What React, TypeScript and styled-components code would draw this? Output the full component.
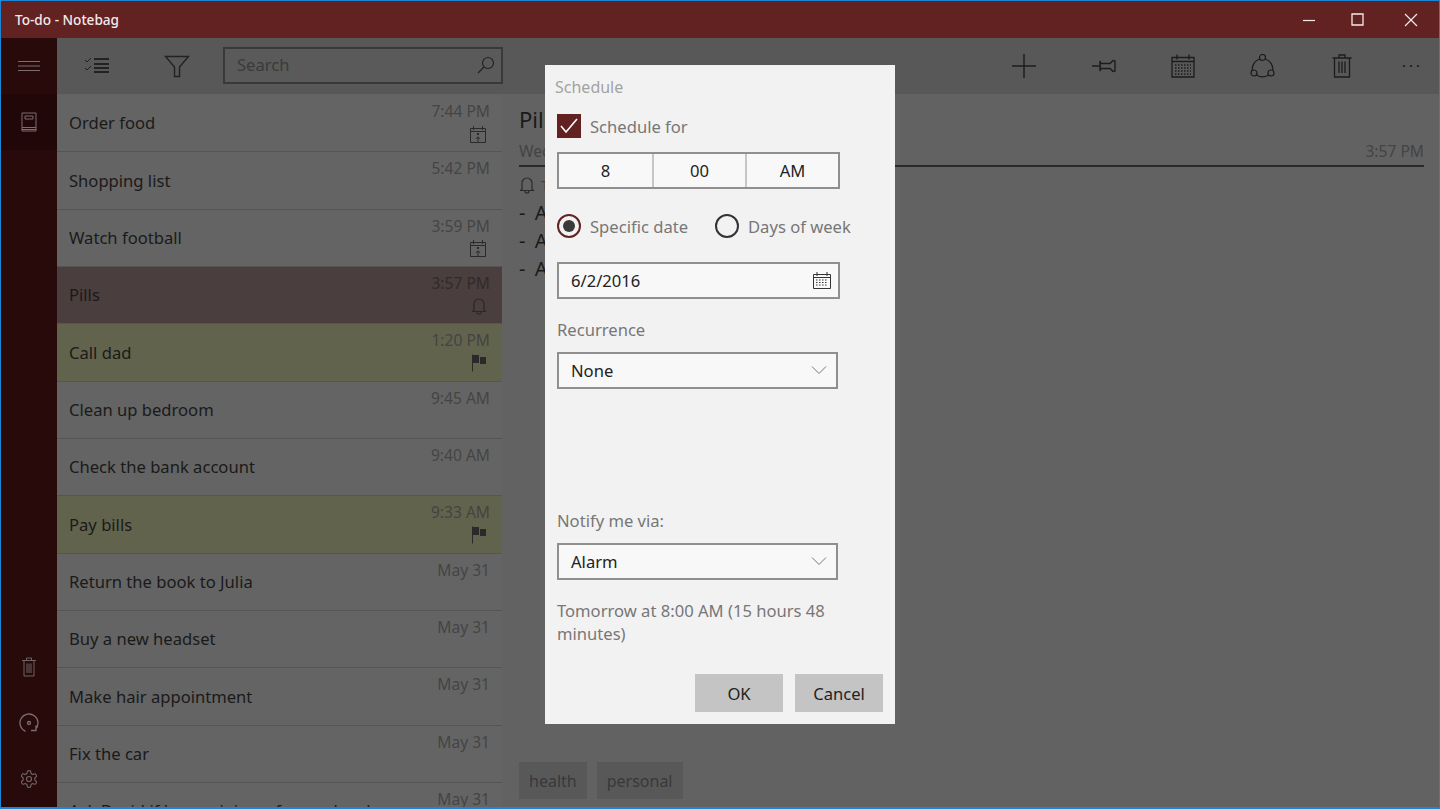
import React from "react";
import styled, { createGlobalStyle } from "styled-components";

const GlobalStyle = createGlobalStyle`
  html, body {
    margin: 0;
    padding: 0;
    height: 100%;
    overflow: hidden;
    background: #636363;
  }
  * { box-sizing: border-box; }
`;

const font = `"Noto Sans", "Open Sans", sans-serif`;

type Task = {
  title: string;
  time: string;
  mark?: "calendar" | "bell" | "flag";
  tone?: "selected" | "flagged";
};

const tasks: Task[] = [
  { title: "Order food", time: "7:44 PM", mark: "calendar" },
  { title: "Shopping list", time: "5:42 PM" },
  { title: "Watch football", time: "3:59 PM", mark: "calendar" },
  { title: "Pills", time: "3:57 PM", mark: "bell", tone: "selected" },
  { title: "Call dad", time: "1:20 PM", mark: "flag", tone: "flagged" },
  { title: "Clean up bedroom", time: "9:45 AM" },
  { title: "Check the bank account", time: "9:40 AM" },
  { title: "Pay bills", time: "9:33 AM", mark: "flag", tone: "flagged" },
  { title: "Return the book to Julia", time: "May 31" },
  { title: "Buy a new headset", time: "May 31" },
  { title: "Make hair appointment", time: "May 31" },
  { title: "Fix the car", time: "May 31" },
  { title: "Ask David if he can join us for our lunch", time: "May 31" },
];

const Window = styled.div`
  width: 1440px;
  height: 809px;
  border: 1px solid #1c86d6;
  border-bottom-width: 2px;
  display: flex;
  flex-direction: column;
  position: relative;
  overflow: hidden;
  font-family: ${font};
`;

const TitleBar = styled.div`
  height: 37px;
  flex: none;
  background: #632222;
  display: flex;
  align-items: center;
  justify-content: space-between;
  padding-left: 14px;
  color: #f4eaea;
  font-size: 13.6px;
  font-weight: 500;
`;

const WindowControls = styled.div`
  display: flex;
  align-items: center;
  gap: 27px;
  padding-right: 21px;
  svg { display: block; }
`;

const MaximizeIcon = styled.svg`
  margin-left: 8px;
`;

const CloseIcon = styled.svg`
  margin-left: 13px;
`;

const Body = styled.div`
  flex: 1;
  min-height: 0;
  display: flex;
`;

const Sidebar = styled.nav`
  width: 56px;
  flex: none;
  background: #280a0b;
  display: flex;
  flex-direction: column;
`;

const SideButton = styled.div<{ $active?: boolean }>`
  height: 56px;
  flex: none;
  display: flex;
  align-items: center;
  justify-content: center;
  background: ${(p) => (p.$active ? "#210708" : "transparent")};
  svg { display: block; margin-left: -1px; }
`;

const SideSpacer = styled.div`
  flex: 1;
`;

const Main = styled.div`
  flex: 1;
  min-width: 0;
  display: flex;
  flex-direction: column;
`;

const Toolbar = styled.div`
  height: 56px;
  flex: none;
  background: #585858;
  display: flex;
  align-items: center;
  justify-content: space-between;
`;

const ToolGroup = styled.div`
  display: flex;
  align-items: center;
`;

const ToolButton = styled.div`
  width: 80px;
  height: 56px;
  display: flex;
  align-items: center;
  justify-content: center;
`;

const SearchBox = styled.div`
  width: 280px;
  height: 37px;
  margin: -1px 0 0 6px;
  border: 2px solid #393939;
  background: #5a5a5a;
  display: flex;
  align-items: center;
  justify-content: space-between;
  padding: 0 6px 2px 12px;
  color: #3a3a3a;
  font-size: 16.6px;
`;

const ActionTool = styled(ToolButton)`
  width: 79.5px;
`;

const MoreButton = styled(ToolButton)`
  width: 57px;
`;

const Content = styled.div`
  flex: 1;
  min-height: 0;
  display: flex;
`;

const TaskList = styled.div`
  width: 445px;
  flex: none;
  overflow: hidden;
  padding-top: 1px;
  background: #636363;
`;

const Row = styled.div<{ $tone?: Task["tone"] }>`
  height: 57.35px;
  display: flex;
  justify-content: space-between;
  padding: 6px 12px 0 12px;
  border-bottom: 1px solid #555;
  color: #1a1a1a;
  background: ${(p) =>
    p.$tone === "selected"
      ? "#4a3e3e"
      : p.$tone === "flagged"
      ? "#62634c"
      : "#646464"};
`;

const RowTitle = styled.div`
  font-size: 16.6px;
  line-height: 22px;
  align-self: center;
  margin-top: -6px;
  white-space: nowrap;
`;

const RowMeta = styled.div<{ $tone?: Task["tone"] }>`
  display: flex;
  flex-direction: column;
  align-items: flex-end;
  color: ${(p) => (p.$tone === "selected" ? "#312b2b" : "#444")};
  font-size: 15.6px;
  line-height: 20px;
`;

const MarkSlot = styled.div`
  height: 22px;
  margin-top: 2px;
  padding-right: 3px;
  display: flex;
  align-items: center;
  svg { display: block; }
`;

const Details = styled.section`
  flex: 1;
  min-width: 0;
  background: #626262;
  padding: 11px 15px 0 17px;
  display: flex;
  flex-direction: column;
  color: #1a1a1a;
`;

const NoteTitle = styled.h1`
  margin: 0;
  font-size: 22px;
  line-height: 29px;
  font-weight: 400;
`;

const NoteDate = styled.div`
  display: flex;
  justify-content: space-between;
  margin-top: 7px;
  padding-bottom: 4px;
  border-bottom: 2px solid #2a2a2a;
  color: #444;
  font-size: 15.6px;
  line-height: 20px;
`;

const NoteReminder = styled.div`
  display: flex;
  align-items: center;
  gap: 6px;
  margin-top: 8px;
  height: 20px;
  color: #444;
  font-size: 15px;
  svg { display: block; }
`;

const NoteBody = styled.div`
  margin-top: 4px;
  font-size: 20px;
  line-height: 28px;
  word-spacing: 4px;
`;

const TagRow = styled.div`
  margin-top: auto;
  margin-bottom: 8px;
  display: flex;
  gap: 10px;
`;

const Tag = styled.div`
  height: 37px;
  padding: 0 10px;
  background: #585858;
  color: #383838;
  display: flex;
  align-items: center;
  font-size: 16px;
`;

const Dialog = styled.div`
  position: absolute;
  left: 544px;
  top: 64px;
  width: 350px;
  height: 659px;
  background: #f2f2f2;
  padding: 11px 12px 12px 12px;
  display: flex;
  flex-direction: column;
  align-items: flex-start;
  color: #777;
  font-size: 16.6px;
`;

const DialogTitle = styled.div`
  margin-left: -2px;
  height: 22px;
  line-height: 22px;
  color: #a3a3a3;
  font-size: 16px;
`;

const CheckRow = styled.div`
  display: flex;
  align-items: center;
  gap: 9px;
  margin-top: 16px;
  height: 24px;
`;

const CheckBox = styled.div`
  width: 24px;
  height: 24px;
  background: #632222;
  display: flex;
  align-items: center;
  justify-content: center;
`;

const TimePicker = styled.div`
  margin-top: 14px;
  width: 283px;
  height: 37px;
  border: 2px solid #8f8f8f;
  background: #f8f8f8;
  display: grid;
  grid-template-columns: 1fr 1fr 1fr;
`;

const TimeCell = styled.div`
  display: flex;
  align-items: center;
  justify-content: center;
  color: #222;
  border-left: 2px solid #c6c6c6;
  &:first-child { border-left: 0; }
`;

const RadioRow = styled.div`
  display: flex;
  align-items: center;
  margin-top: 25px;
  height: 24px;
`;

const RadioItem = styled.div`
  width: 158px;
  display: flex;
  align-items: center;
  gap: 9px;
  white-space: nowrap;
`;

const RadioCircle = styled.div<{ $on?: boolean }>`
  width: 24px;
  height: 24px;
  border-radius: 50%;
  border: 2px solid ${(p) => (p.$on ? "#632222" : "#333")};
  display: flex;
  align-items: center;
  justify-content: center;
  &::after {
    content: "";
    display: ${(p) => (p.$on ? "block" : "none")};
    width: 12px;
    height: 12px;
    border-radius: 50%;
    background: #3a3a3a;
  }
`;

const Field = styled.div<{ $width: number; $gap: number }>`
  margin-top: ${(p) => p.$gap}px;
  width: ${(p) => p.$width}px;
  height: 37px;
  flex: none;
  border: 2px solid #8f8f8f;
  background: #f8f8f8;
  color: #222;
  display: flex;
  align-items: center;
  justify-content: space-between;
  padding: 0 6px 0 12px;
  svg { display: block; }
`;

const ChevronIcon = styled.svg`
  margin-right: 3px;
  margin-top: -2px;
`;

const FieldLabel = styled.div<{ $gap: number }>`
  margin-top: ${(p) => p.$gap}px;
  height: 22px;
  line-height: 22px;
`;

const Message = styled.div`
  margin-top: 19px;
  width: 300px;
  line-height: 23px;
`;

const DialogActions = styled.div`
  margin-top: auto;
  align-self: flex-end;
  display: flex;
  gap: 12px;
`;

const ActionButton = styled.div`
  width: 88px;
  height: 38px;
  background: #c4c4c4;
  color: #222;
  display: flex;
  align-items: center;
  justify-content: center;
`;

const CalendarMark = () => (
  <svg width="18" height="19" viewBox="0 0 18 19" fill="none" stroke="#2a2a2a" strokeWidth="1">
    <path d="M1.5 3.5h15v14h-15zM1.5 6.5h15M4.5 1v4M13.5 1v4M9 18v-6M6.8 14L9 11.8 11.2 14" />
    <rect x="8" y="8" width="2" height="2" fill="#2a2a2a" stroke="none" />
  </svg>
);

const Bell = () => (
  <svg width="16" height="18" viewBox="0 0 16 18" fill="none" stroke="#2a2a2a" strokeWidth="1.2">
    <path d="M3 13.5V7a5 5 0 0 1 10 0v6.5l2 1H1zM6 15a2 2 0 0 0 4 0" />
  </svg>
);

const Flag = () => (
  <svg width="16" height="18" viewBox="0 0 16 18" fill="none">
    <path d="M1.5 0.5v17" stroke="#2a2a2a" strokeWidth="1" />
    <path d="M2 1h6v8H2zM9 3h6v7H9z" fill="#2a2a2a" />
  </svg>
);

const PickerCalendar = () => (
  <svg width="20" height="19" viewBox="0 0 20 19" fill="none" stroke="#333" strokeWidth="1">
    <path d="M1.5 3.5h17v14h-17zM1.5 6.5h17M5 1v4M15 1v4" />
    <path d="M4 9h12M4 11.5h12M4 14h12" strokeDasharray="1.5 1.5" />
  </svg>
);

const Chevron = () => (
  <ChevronIcon width="16" height="10" viewBox="0 0 16 10" fill="none" stroke="#777" strokeWidth="1">
    <path d="M1 1.5l7 7 7-7" />
  </ChevronIcon>
);

const marks = {
  calendar: <CalendarMark />,
  bell: <Bell />,
  flag: <Flag />,
};

export default function App() {
  return (
    <Window>
      <GlobalStyle />
      <TitleBar>
        <span>To-do - Notebag</span>
        <WindowControls>
          <svg width="14" height="14" viewBox="0 0 14 14" stroke="#f4eaea" strokeWidth="1.2">
            <path d="M1 7.5h12" />
          </svg>
          <MaximizeIcon width="13" height="13" viewBox="0 0 13 13" fill="none" stroke="#f4eaea" strokeWidth="1.3">
            <path d="M1 1h11v11H1z" />
          </MaximizeIcon>
          <CloseIcon width="14" height="14" viewBox="0 0 14 14" stroke="#f4eaea" strokeWidth="1.2">
            <path d="M1 1l12 12M13 1L1 13" />
          </CloseIcon>
        </WindowControls>
      </TitleBar>
      <Body>
        <Sidebar>
          <SideButton>
            <svg width="22" height="12" viewBox="0 0 22 12" stroke="#7c6e6e" strokeWidth="1">
              <path d="M0 1.5h22M0 6h22M0 10.5h22" />
            </svg>
          </SideButton>
          <SideButton $active>
            <svg width="16" height="20" viewBox="0 0 16 20" fill="none" stroke="#7c6e6e" strokeWidth="1">
              <path d="M1 1h14v18H1zM1 15.5h14M1 17.5h14M4 4h8v3H4z" />
            </svg>
          </SideButton>
          <SideSpacer />
          <SideButton>
            <svg width="14" height="20" viewBox="0 0 14 20" fill="none" stroke="#6f6363" strokeWidth="1">
              <path d="M0 3.5h14M2 3.5V19h10V3.5M4.5 3.5V1h5v2.5M5 6.5V16M7 6.5V16M9 6.5V16" />
            </svg>
          </SideButton>
          <SideButton>
            <svg width="20" height="20" viewBox="0 0 20 20" fill="none" stroke="#7c6e6e" strokeWidth="1.3">
              <path d="M6.5 18.3A9 9 0 1 1 16.5 16.2M17 12.5v5h-5" />
              <circle cx="10" cy="10" r="1.5" />
            </svg>
          </SideButton>
          <SideButton>
            <svg width="20" height="20" viewBox="0 0 24 24" fill="none" stroke="#6f6363" strokeWidth="1.4">
              <path d="M12.22 2h-.44a2 2 0 0 0-2 2v.18a2 2 0 0 1-1 1.73l-.43.25a2 2 0 0 1-2 0l-.15-.08a2 2 0 0 0-2.73.73l-.22.38a2 2 0 0 0 .73 2.73l.15.1a2 2 0 0 1 1 1.72v.51a2 2 0 0 1-1 1.74l-.15.09a2 2 0 0 0-.73 2.73l.22.38a2 2 0 0 0 2.73.73l.15-.08a2 2 0 0 1 2 0l.43.25a2 2 0 0 1 1 1.73V20a2 2 0 0 0 2 2h.44a2 2 0 0 0 2-2v-.18a2 2 0 0 1 1-1.73l.43-.25a2 2 0 0 1 2 0l.15.08a2 2 0 0 0 2.73-.73l.22-.39a2 2 0 0 0-.73-2.73l-.15-.08a2 2 0 0 1-1-1.74v-.5a2 2 0 0 1 1-1.74l.15-.09a2 2 0 0 0 .73-2.73l-.22-.38a2 2 0 0 0-2.73-.73l-.15.08a2 2 0 0 1-2 0l-.43-.25a2 2 0 0 1-1-1.73V4a2 2 0 0 0-2-2z" />
              <circle cx="12" cy="12" r="3" />
            </svg>
          </SideButton>
        </Sidebar>
        <Main>
          <Toolbar>
            <ToolGroup>
              <ToolButton>
                <svg width="26" height="18" viewBox="0 0 26 18" fill="none" stroke="#222">
                  <path d="M1 3l2 2 4-4M1 11l2 2 4-4" strokeWidth="1" />
                  <path d="M10 2h15M10 7h15M10 11h15M10 15h15" strokeWidth="2" />
                </svg>
              </ToolButton>
              <ToolButton>
                <svg width="26" height="23" viewBox="0 0 26 23" fill="none" stroke="#222" strokeWidth="1.4">
                  <path d="M1.5 1.5h23L15.5 12v9.5h-5V12z" />
                </svg>
              </ToolButton>
              <SearchBox>
                <span>Search</span>
                <svg width="18" height="18" viewBox="0 0 18 18" fill="none" stroke="#222" strokeWidth="1.2">
                  <circle cx="11" cy="7" r="5.5" />
                  <path d="M7 11l-6 6" />
                </svg>
              </SearchBox>
            </ToolGroup>
            <ToolGroup>
              <ActionTool>
                <svg width="24" height="24" viewBox="0 0 24 24" stroke="#1c1c1c" strokeWidth="1.4">
                  <path d="M12 0v24M0 12h24" />
                </svg>
              </ActionTool>
              <ActionTool>
                <svg width="24" height="16" viewBox="0 0 24 16" fill="none" stroke="#1c1c1c" strokeWidth="1.4">
                  <path d="M0 8h9M8 3l1 2.5h9l3-3 2 .5v10l-2 .5-3-3H9L8 13z" />
                </svg>
              </ActionTool>
              <ActionTool>
                <svg width="24" height="24" viewBox="0 0 24 24" fill="none" stroke="#1c1c1c">
                  <path d="M1 3.5h22v19.5H1z" strokeWidth="1.3" />
                  <path d="M1 7.5h22M6 0.5v5M18 0.5v5" strokeWidth="1.3" />
                  <path d="M4 11h16M4 14h16M4 17h16M4 20h16" strokeWidth="1.4" strokeDasharray="1.5 1.5" />
                </svg>
              </ActionTool>
              <ActionTool>
                <svg width="25" height="25" viewBox="0 0 25 25" fill="none" stroke="#1c1c1c" strokeWidth="1.2">
                  <circle cx="12.5" cy="3.5" r="3" />
                  <circle cx="4" cy="19" r="3" />
                  <circle cx="21" cy="19" r="3" />
                  <path d="M9.8 5A11 11 0 0 0 2.2 16.6M15.2 5a11 11 0 0 1 7.6 11.6M6.5 21a11 11 0 0 0 12 0" />
                </svg>
              </ActionTool>
              <ActionTool>
                <svg width="20" height="24" viewBox="0 0 20 24" fill="none" stroke="#1c1c1c" strokeWidth="1.3">
                  <path d="M0.5 4h19M2.5 4v19h15V4M7 4V1h6v3" />
                  <path d="M7 7.5V19M10 7.5V19M13 7.5V19" />
                </svg>
              </ActionTool>
              <MoreButton>
                <svg width="18" height="4" viewBox="0 0 18 4" fill="#1c1c1c">
                  <circle cx="2" cy="2" r="1.1" />
                  <circle cx="9" cy="2" r="1.1" />
                  <circle cx="16" cy="2" r="1.1" />
                </svg>
              </MoreButton>
            </ToolGroup>
          </Toolbar>
          <Content>
            <TaskList>
              {tasks.map((t) => (
                <Row key={t.title} $tone={t.tone}>
                  <RowTitle>{t.title}</RowTitle>
                  <RowMeta $tone={t.tone}>
                    {t.time}
                    {t.mark && <MarkSlot>{marks[t.mark]}</MarkSlot>}
                  </RowMeta>
                </Row>
              ))}
            </TaskList>
            <Details>
              <NoteTitle>Pills</NoteTitle>
              <NoteDate>
                <span>Wednesday, June 1, 2016</span>
                <span>3:57 PM</span>
              </NoteDate>
              <NoteReminder>
                <Bell />
                <span>Tomorrow at 8:00 AM</span>
              </NoteReminder>
              <NoteBody>
                <div>- Aspirin</div>
                <div>- Allergy</div>
                <div>- Antacid</div>
              </NoteBody>
              <TagRow>
                <Tag>health</Tag>
                <Tag>personal</Tag>
              </TagRow>
            </Details>
          </Content>
        </Main>
      </Body>
      <Dialog>
        <DialogTitle>Schedule</DialogTitle>
        <CheckRow>
          <CheckBox>
            <svg width="18" height="16" viewBox="0 0 18 16" fill="none" stroke="#fff" strokeWidth="1.6">
              <path d="M1 8l5 6L17 1" />
            </svg>
          </CheckBox>
          Schedule for
        </CheckRow>
        <TimePicker>
          <TimeCell>8</TimeCell>
          <TimeCell>00</TimeCell>
          <TimeCell>AM</TimeCell>
        </TimePicker>
        <RadioRow>
          <RadioItem>
            <RadioCircle $on />
            Specific date
          </RadioItem>
          <RadioItem>
            <RadioCircle />
            Days of week
          </RadioItem>
        </RadioRow>
        <Field $width={283} $gap={24}>
          6/2/2016
          <PickerCalendar />
        </Field>
        <FieldLabel $gap={20}>Recurrence</FieldLabel>
        <Field $width={281} $gap={11}>
          None
          <Chevron />
        </Field>
        <FieldLabel $gap={121}>Notify me via:</FieldLabel>
        <Field $width={281} $gap={11}>
          Alarm
          <Chevron />
        </Field>
        <Message>Tomorrow at 8:00 AM (15 hours 48 minutes)</Message>
        <DialogActions>
          <ActionButton>OK</ActionButton>
          <ActionButton>Cancel</ActionButton>
        </DialogActions>
      </Dialog>
    </Window>
  );
}
